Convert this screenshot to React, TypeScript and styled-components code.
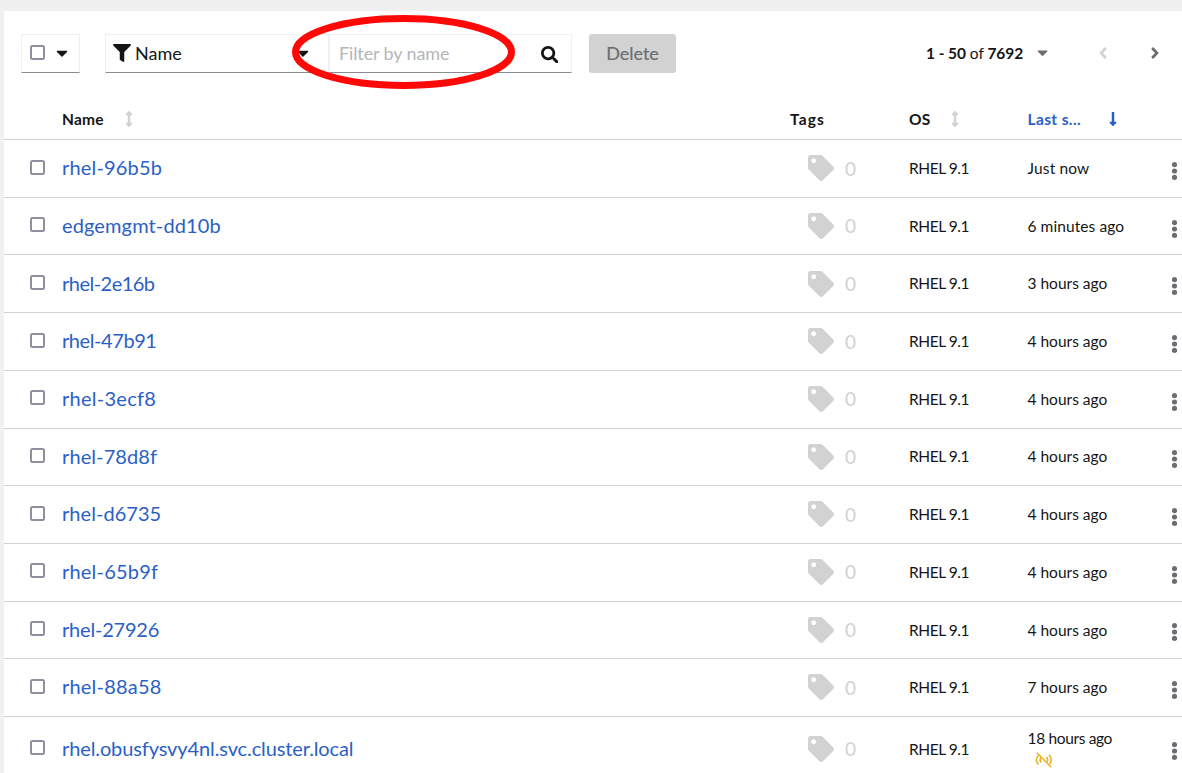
import React from "react";
import styled, { createGlobalStyle } from "styled-components";
import {
  FaFilter,
  FaCaretDown,
  FaSearch,
  FaTag,
  FaArrowsAltV,
  FaLongArrowAltDown,
  FaAngleLeft,
  FaAngleRight,
} from "react-icons/fa";

const GlobalStyle = createGlobalStyle`
  * { box-sizing: border-box; }
  body {
    margin: 0;
    background: #f0f0f0;
    color: #151515;
    font-family: Lato, "Open Sans", sans-serif;
    overflow: hidden;
  }
  svg { display: block; flex: none; }
`;

const Page = styled.div`
  height: 773px;
  padding: 11px 0 0 4px;
  overflow: hidden;
`;

const Panel = styled.main`
  height: 100%;
  background: #fff;
`;

const Toolbar = styled.div`
  position: relative;
  display: flex;
  align-items: center;
  height: 89.1px;
  padding: 23px 0 27.1px 17px;
`;

const Control = styled.div<{ $width: number }>`
  display: flex;
  align-items: center;
  width: ${(p) => p.$width}px;
  height: 39px;
  border: 1px solid #f0f0f0;
  border-bottom-color: #8a8d90;
`;

const BulkSelect = styled(Control)`
  padding: 0 0 2px 8px;
  gap: 7.5px;
  margin-right: 25px;
`;

const Checkbox = styled.input.attrs({ type: "checkbox" })`
  appearance: none;
  display: block;
  width: 15px;
  height: 15px;
  margin: 0;
  border: 2px solid #8f8f9d;
  border-radius: 2.5px;
  background: #fff;
`;

const FieldSelect = styled(Control)`
  padding: 0 16px 2px 7px;
`;

const FieldLabel = styled.span`
  flex: 1;
  margin-left: 4px;
  font-size: 18px;
`;

const SearchField = styled(Control)`
  padding: 0 13px 2px 9px;
  justify-content: space-between;
`;

const SearchInput = styled.input`
  width: 170px;
  padding: 0;
  border: 0;
  outline: 0;
  font: 18px Lato, sans-serif;
  letter-spacing: -0.12px;
  color: #151515;
  &::placeholder { color: #b4b6b9; opacity: 1; }
`;

const SearchGlyph = styled.span`
  padding-top: 4px;
`;

const DeleteButton = styled.button`
  width: 87px;
  height: 39px;
  margin-left: 17px;
  padding: 0 0 2px;
  border: 0;
  border-radius: 3px;
  background: #d2d2d2;
  color: #6a6e73;
  font: 18px Lato, sans-serif;
  -webkit-text-stroke: 0.2px;
`;

const Pager = styled.div`
  display: flex;
  align-items: center;
  margin-left: auto;
  padding: 0 18.5px 2px 0;
  color: #6a6e73;
`;

const Range = styled.span`
  width: 97px;
  margin-right: 11px;
  color: #151515;
  font-size: 15.5px;
  letter-spacing: -0.06px;
  white-space: nowrap;
`;

const PageArrow = styled.span<{ $disabled?: boolean; $gap: number }>`
  margin-left: ${(p) => p.$gap}px;
  color: ${(p) => (p.$disabled ? "#d2d2d2" : "#6a6e73")};
`;

const Annotation = styled.svg`
  position: absolute;
  left: 286px;
  top: 2px;
`;

const Row = styled.div<{ $height: number }>`
  display: grid;
  grid-template-columns: 58px 728px 119px 118.5px 144.5px 10px;
  align-items: center;
  height: ${(p) => p.$height}px;
  border-bottom: 1px solid #d2d2d2;
`;

const HeadCell = styled.div<{ $active?: boolean; $gap?: number; $tracking?: number }>`
  display: flex;
  align-items: center;
  gap: ${(p) => p.$gap ?? 0}px;
  padding-bottom: 1px;
  font-size: 15.5px;
  font-weight: 700;
  letter-spacing: ${(p) => p.$tracking ?? 0}px;
  color: ${(p) => (p.$active ? "#2b5fc7" : "#151515")};
`;

const SortIcon = styled.span`
  color: #d2d2d2;
`;

const CheckCell = styled.div`
  padding: 0 0 2.6px 26px;
`;

const NameLink = styled.a<{ $tracking: number }>`
  padding-bottom: 2.4px;
  color: #2b5fc7;
  font-size: 20px;
  line-height: 30px;
  letter-spacing: ${(p) => p.$tracking}px;
`;

const TagCell = styled.div`
  display: flex;
  align-items: center;
  gap: 11px;
  padding: 0 0 0.4px 18px;
  color: #d2d2d2;
  font-size: 19px;
  line-height: 24px;
`;

const TagCount = styled.span`
  padding-top: 0.6px;
`;

const TextCell = styled.div<{ $tracking?: number }>`
  padding-bottom: 0.8px;
  font-size: 15.5px;
  line-height: 22px;
  letter-spacing: ${(p) => p.$tracking ?? 0}px;
  white-space: nowrap;
`;

const Kebab = styled.div`
  padding: 5px 0 0;
  color: #6a6e73;
`;

const StaleIcon = styled.div`
  padding: 3px 0 2px 7px;
`;

const KebabIcon = () => (
  <svg width="5" height="18" viewBox="0 0 5 18" fill="currentColor">
    <circle cx="2.5" cy="2.7" r="2.6" />
    <circle cx="2.5" cy="9" r="2.6" />
    <circle cx="2.5" cy="15.3" r="2.6" />
  </svg>
);

const Disconnected = () => (
  <svg width="18" height="16" viewBox="0 0 18 16" fill="none" stroke="#ecb01f" strokeWidth="1.5">
    <path d="M2 .8 L16.2 15.2" />
    <path d="M3.6 3.2 Q-.8 8 3.6 12.6" />
    <path d="M6.2 5.4 Q4 8 6.2 10.6" />
    <path d="M14 2.8 Q18.2 7.8 14.6 12" />
    <path d="M11.4 5 Q13.6 7.6 12 10" />
  </svg>
);

const rows = [
  { name: "rhel-96b5b", tracking: 0.17, seen: "Just now", seenTracking: 0.15 },
  { name: "edgemgmt-dd10b", tracking: 0.12, seen: "6 minutes ago", seenTracking: 0.08 },
  { name: "rhel-2e16b", tracking: -0.52, seen: "3 hours ago" },
  { name: "rhel-47b91", tracking: -0.42, seen: "4 hours ago" },
  { name: "rhel-3ecf8", tracking: 0.27, seen: "4 hours ago" },
  { name: "rhel-78d8f", tracking: 0.1, seen: "4 hours ago" },
  { name: "rhel-d6735", tracking: 0.05, seen: "4 hours ago" },
  { name: "rhel-65b9f", tracking: 0.2, seen: "4 hours ago" },
  { name: "rhel-27926", tracking: -0.2, seen: "4 hours ago" },
  { name: "rhel-88a58", tracking: 0.2, seen: "7 hours ago" },
  {
    name: "rhel.obusfysvy4nl.svc.cluster.local",
    tracking: -0.11,
    seen: "18 hours ago",
    seenTracking: -0.35,
    stale: true,
  },
];

export default function App() {
  return (
    <>
      <GlobalStyle />
      <Page>
        <Panel>
          <Toolbar>
            <BulkSelect $width={59}>
              <Checkbox aria-label="Select all" />
              <FaCaretDown size={18} />
            </BulkSelect>
            <FieldSelect $width={224}>
              <FaFilter size={18} />
              <FieldLabel>Name</FieldLabel>
              <FaCaretDown size={18} />
            </FieldSelect>
            <SearchField $width={243}>
              <SearchInput placeholder="Filter by name" />
              <SearchGlyph><FaSearch size={17.5} /></SearchGlyph>
            </SearchField>
            <DeleteButton disabled>Delete</DeleteButton>
            <Pager>
              <Range><b>1 - 50</b> of <b>7692</b></Range>
              <FaCaretDown size={17} />
              <PageArrow $disabled $gap={42.5}><FaAngleLeft size={18} /></PageArrow>
              <PageArrow $gap={34}><FaAngleRight size={18} /></PageArrow>
            </Pager>
            <Annotation width="228" height="78" viewBox="0 0 228 78">
              <ellipse cx="113.5" cy="39" rx="108" ry="33.5" fill="none" stroke="#ff0808" strokeWidth="7" />
            </Annotation>
          </Toolbar>
          <Row $height={40}>
            <span />
            <HeadCell $gap={17} $tracking={0.25}>Name<SortIcon><FaArrowsAltV size={16} /></SortIcon></HeadCell>
            <HeadCell $tracking={1.15}>Tags</HeadCell>
            <HeadCell $gap={16.5} $tracking={0.3}>OS<SortIcon><FaArrowsAltV size={16} /></SortIcon></HeadCell>
            <HeadCell $active $gap={23.5} $tracking={0.38}>Last s...<FaLongArrowAltDown size={16} /></HeadCell>
          </Row>
          {rows.map((r) => (
            <Row key={r.name} $height={r.stale ? 65 : 57.7}>
              <CheckCell><Checkbox aria-label={r.name} /></CheckCell>
              <NameLink $tracking={r.tracking}>{r.name}</NameLink>
              <TagCell><FaTag size={26} /><TagCount>0</TagCount></TagCell>
              <TextCell $tracking={-0.45}>RHEL 9.1</TextCell>
              <TextCell $tracking={r.seenTracking}>
                {r.seen}
                {r.stale && <StaleIcon><Disconnected /></StaleIcon>}
              </TextCell>
              <Kebab><KebabIcon /></Kebab>
            </Row>
          ))}
        </Panel>
      </Page>
    </>
  );
}
